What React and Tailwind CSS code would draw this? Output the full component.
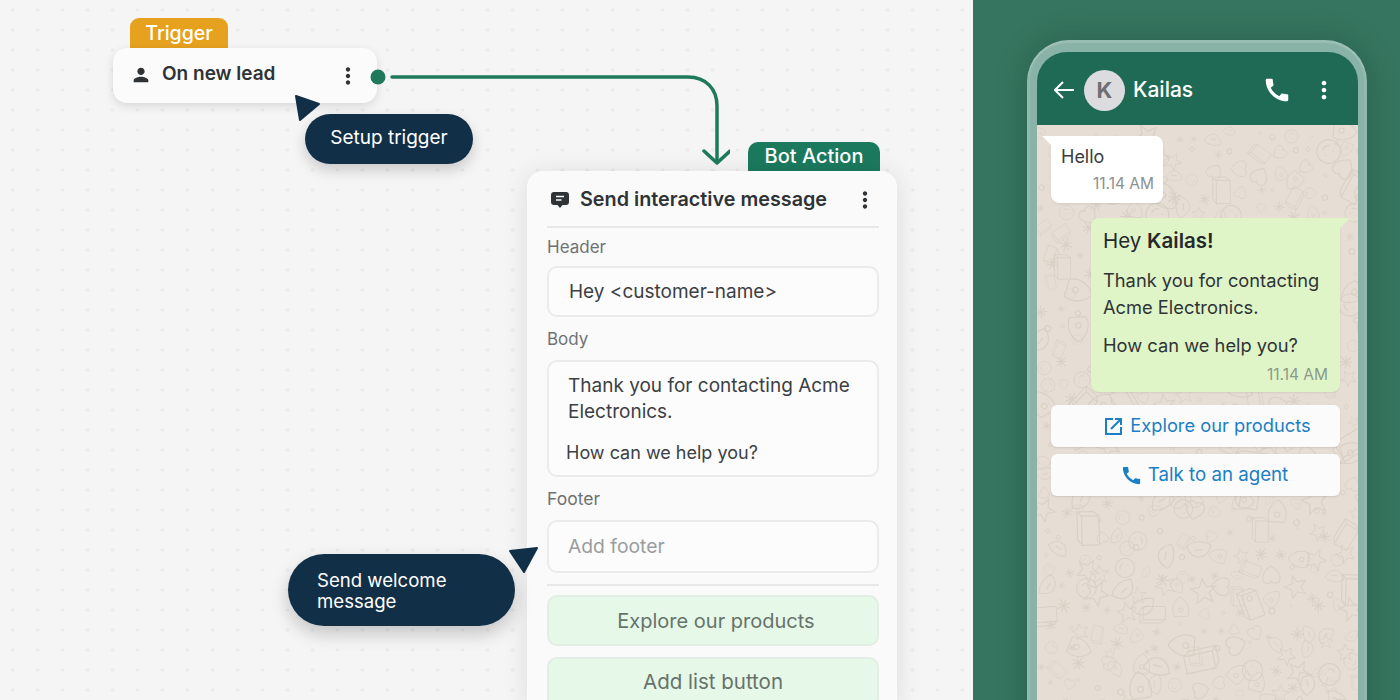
import React from "react";
import { MdPerson, MdMoreVert, MdCall } from "react-icons/md";

const inter = { fontFamily: "Inter, sans-serif" };

// faint wallpaper doodles, seeded so every render is the same
function Doodles() {
    let seed = 17;
    const rnd = () => {
        seed = (seed * 16807) % 2147483647;
        return seed / 2147483647;
    };
    const items = [];
    for (let y = 4; y < 600; y += 19) {
        for (let x = 2; x < 330; x += 19) {
            const px = x + rnd() * 14;
            const py = y + rnd() * 14;
            const rot = rnd() * 360;
            const kind = Math.floor(rnd() * 10);
            const s = 0.6 + rnd() * 0.9;
            const key = `${x}-${y}`;
            const t = `translate(${px} ${py}) rotate(${rot}) scale(${s})`;
            if (kind === 0) items.push(<path key={key} transform={t} d="M0 -9 L2.6 -3 L9 -2.8 L4 1.4 L5.6 8 L0 4.4 L-5.6 8 L-4 1.4 L-9 -2.8 L-2.6 -3 Z" />);
            else if (kind === 1) items.push(<path key={key} transform={t} d="M-8 0 A8 8 0 1 1 8 0 A8 8 0 1 1 -8 0 M-3 -2 L-3 -1 M3 -2 L3 -1 M-3 3 Q0 5 3 3" />);
            else if (kind === 2) items.push(<path key={key} transform={t} d="M-10 -6 H10 V6 H-10 Z M-10 -6 L-6 -9 H13 L10 -6 M10 6 L13 2 V-9" />);
            else if (kind === 3) items.push(<path key={key} transform={t} d="M0 7 C-10 0 -7 -7 -2 -6 C-1 -6 0 -5 0 -4 C0 -5 1 -6 2 -6 C7 -7 10 0 0 7 Z" />);
            else if (kind === 4 || kind === 5) items.push(<circle key={key} transform={t} cx="0" cy="0" r="2" />);
            else if (kind === 6) items.push(<path key={key} transform={t} d="M-9 3 C-5 -8 5 -8 9 3 C4 7 -4 7 -9 3 Z M-3 0 L3 0" />);
            else if (kind === 7) items.push(<path key={key} transform={t} d="M-6 8 C-10 0 -4 -8 0 -10 C4 -8 10 0 6 8 Z M-2 2 A2 2 0 1 0 2 2 A2 2 0 1 0 -2 2" />);
            else items.push(<path key={key} transform={t} d="M-5 0 L5 0 M0 -5 L0 5 M-3 -3 L3 3 M-3 3 L3 -3" />);
        }
    }
    return (
        <svg className="absolute inset-0 h-full w-full" fill="none" stroke="#d9d0c6" strokeWidth="0.8">
            {items}
        </svg>
    );
}

function Field({ label, labelClass, children, className }) {
    return (
        <div>
            <div className={`text-[#6f7274] ${labelClass}`}>{label}</div>
            <div className={`rounded-[10px] border-2 border-[#ebebeb] bg-[#fcfcfc] ${className}`}>{children}</div>
        </div>
    );
}

function FlowCanvas() {
    return (
        <div
            className="relative h-full w-[973px] shrink-0 bg-[#f5f5f5] bg-[radial-gradient(#ebebeb_1.5px,transparent_2.5px)] bg-[length:25px_20px]"
            style={inter}
        >
            {/* trigger node */}
            <div className="absolute left-[130px] top-[18px] flex h-[34px] w-[98px] justify-center rounded-t-[9px] bg-[#e6a11f] pt-[2px] text-[19.5px] font-medium leading-[26px] text-white">
                Trigger
            </div>
            <div className="absolute left-[113px] top-[48px] flex h-[55px] w-[264px] items-center rounded-[14px] bg-[#fbfbfb] pb-[2px] pl-[17px] pr-[18px] shadow-[0_3px_10px_rgba(0,0,0,0.12)]">
                <MdPerson size={22} className="text-[#2f3336]" />
                <span className="ml-[10px] text-[19px] font-semibold text-[#2f3336]">On new lead</span>
                <MdMoreVert size={26} className="ml-auto mr-[-2px] mt-[3px] text-[#2f3336]" />
            </div>

            {/* connector */}
            <svg className="absolute left-[370px] top-[60px]" width="360" height="110" fill="none">
                <circle cx="8" cy="17" r="7.5" fill="#1f7a5c" />
                <path d="M22 17 H318 C336 17 347 29 347 46 V100" stroke="#1f7a5c" strokeWidth="3.5" strokeLinecap="round" />
                <path d="M334 91 L347 103 L360 91" stroke="#1f7a5c" strokeWidth="3.5" strokeLinecap="round" strokeLinejoin="round" />
            </svg>

            {/* setup trigger callout */}
            <svg className="absolute left-[290px] top-[90px]" width="36" height="36">
                <path d="M6 6 L29 14 L10 30 Z" fill="#122f48" stroke="#122f48" strokeWidth="2" strokeLinejoin="round" />
            </svg>
            <div className="absolute left-[305px] top-[114px] flex h-[50px] w-[168px] items-center justify-center rounded-full bg-[#122f48] pb-[2px] text-[19px] text-white shadow-[0_6px_14px_rgba(0,0,0,0.18)]">
                Setup trigger
            </div>

            {/* bot action node */}
            <div className="absolute left-[748px] top-[142px] flex h-[32px] w-[132px] justify-center rounded-t-[10px] bg-[#1b7a5e] text-[20px] font-medium leading-[28px] text-white">
                Bot Action
            </div>
            <div className="absolute left-[527px] top-[171px] w-[370px] rounded-t-[16px] bg-[#fafafa] pl-[20px] pr-[18px] shadow-[0_2px_26px_rgba(0,0,0,0.1)]">
                <div className="flex h-[57px] items-center border-b-2 border-[#e8e8e8] pt-[2px]">
                    <svg width="20" height="20" viewBox="0 0 20 20" className="ml-[3px] shrink-0">
                        <path d="M4 2 H16 A3 3 0 0 1 19 5 V12 A3 3 0 0 1 16 15 H12.5 L10 18 L7.5 15 H4 A3 3 0 0 1 1 12 V5 A3 3 0 0 1 4 2 Z" fill="#2f3336" />
                        <path d="M6 6.5 H14 M6 10 H11.5" stroke="#fafafa" strokeWidth="1.6" />
                    </svg>
                    <span className="ml-[10px] text-[19.8px] font-semibold text-[#2f3336]">Send interactive message</span>
                    <MdMoreVert size={26} className="ml-auto mr-[1px] text-[#2f3336]" />
                </div>
                <Field
                    label="Header"
                    labelClass="h-[38px] pt-[8px] text-[17px] leading-[22px]"
                    className="flex h-[51px] items-center pl-[20px] pt-[1px] text-[19px] text-[#3c4043]"
                >
                    {"Hey <customer-name>"}
                </Field>
                <Field
                    label="Body"
                    labelClass="mt-[2px] h-[41px] pt-[9px] text-[17px] leading-[22px]"
                    className="h-[117px] px-[19px] pt-[11px] text-[19px] leading-[26px] text-[#3c4043]"
                >
                    <p>Thank you for contacting Acme Electronics.</p>
                    <p className="ml-[-2px] mt-[15px] text-[18px]">How can we help you?</p>
                </Field>
                <Field
                    label="Footer"
                    labelClass="mt-[2px] h-[41px] pt-[9px] text-[17.5px] leading-[22px]"
                    className="flex h-[53px] items-center pl-[19px] text-[19.3px] text-[#9a9c9e]"
                >
                    Add footer
                </Field>
                <div className="mt-[11px] border-t-2 border-[#e8e8e8]" />
                <div className="mt-[9px] flex h-[51px] items-center justify-center rounded-[10px] border-2 border-[#e2ede3] bg-[#e6f8e7] pl-[6px] text-[20px] text-[#66736b]">
                    Explore our products
                </div>
                <div className="mt-[11px] flex h-[51px] items-center justify-center rounded-[10px] border-2 border-[#e2ede3] bg-[#e6f8e7] text-[20.5px] text-[#66736b]">
                    Add list button
                </div>
            </div>

            {/* welcome callout */}
            <svg className="absolute left-[504px] top-[542px]" width="40" height="36">
                <path d="M6 9 L33 6 L20 30 Z" fill="#122f48" stroke="#122f48" strokeWidth="2" strokeLinejoin="round" />
            </svg>
            <div className="absolute left-[288px] top-[554px] flex h-[72px] w-[227px] items-center rounded-full bg-[#122f48] pl-[29px] pt-[2px] text-[18.6px] leading-[21px] text-white shadow-[0_8px_18px_rgba(0,0,0,0.2)]">
                Send welcome
                <br />
                message
            </div>
        </div>
    );
}

function PhonePanel() {
    return (
        <div className="flex-1 overflow-hidden bg-[#36755f] pl-[54px] pt-[40px]" style={inter}>
            <div className="h-[700px] w-[340px] rounded-t-[42px] bg-[#88b3a6] pl-[10px] pr-[9px] pt-[12px] shadow-[0_0_30px_rgba(0,40,30,0.25),inset_0_3px_0_rgba(255,255,255,0.14),inset_3px_0_0_rgba(255,255,255,0.08),inset_-3px_0_0_rgba(255,255,255,0.08)]">
                <div className="flex h-full flex-col overflow-hidden rounded-t-[30px]">
                    <div className="flex h-[73px] shrink-0 items-center bg-[#1f6a55] pt-[3px] text-white">
                        <svg width="20" height="20" viewBox="0 0 20 20" fill="none" stroke="#ffffff" strokeWidth="2" className="ml-[17px]">
                            <path d="M20 10 H1 M9 2 L1 10 L9 18" />
                        </svg>
                        <div className="ml-[10px] flex h-[41px] w-[41px] items-center justify-center rounded-full bg-[#dcdcdf] text-[22px] font-bold text-[#6f6f72]">
                            K
                        </div>
                        <span className="ml-[8px] text-[21px] font-medium">Kailas</span>
                        <MdCall size={30} className="ml-auto" />
                        <MdMoreVert size={28} className="ml-[18px] mr-[20px]" />
                    </div>
                    <div className="relative flex-1 bg-[#e6ddd4] pl-[14px] pr-[18px] pt-[11px]">
                        <Doodles />
                        <div className="relative h-[67px] w-[112px] rounded-[8px] rounded-tl-none bg-white pl-[10px] pt-[9px] shadow-[0_1px_2px_rgba(0,0,0,0.08)]">
                            <svg className="absolute left-[-9px] top-0" width="10" height="10">
                                <path d="M0 0 H10 V10 Z" fill="#ffffff" />
                            </svg>
                            <div className="text-[18px] leading-[24px] text-[#3a3d40]">Hello</div>
                            <div className="mt-[5px] pr-[9px] text-right text-[15.5px] leading-[20px] text-[#8d8f91]">11.14 AM</div>
                        </div>
                        <div className="relative ml-[40px] mt-[15px] h-[174px] w-[249px] rounded-[8px] rounded-tr-none bg-[#dff5c8] pl-[12px] pt-[10px] shadow-[0_1px_2px_rgba(0,0,0,0.08)]">
                            <svg className="absolute right-[-10px] top-0" width="10" height="10">
                                <path d="M0 0 H10 L0 10 Z" fill="#dff5c8" />
                            </svg>
                            <div className="text-[20.5px] leading-[26px] text-[#26292b]">
                                Hey <span className="font-semibold">Kailas!</span>
                            </div>
                            <div className="mt-[13px] text-[18.3px] leading-[27px] text-[#2f3336]">
                                Thank you for contacting
                                <br />
                                Acme Electronics.
                            </div>
                            <div className="mt-[11px] text-[18.3px] leading-[27px] text-[#2f3336]">How can we help you?</div>
                            <div className="mt-[6px] pr-[12px] text-right text-[15.5px] leading-[20px] text-[#8b9a88]">11.14 AM</div>
                        </div>
                        <div className="relative mt-[13px] flex h-[42px] w-[289px] items-center justify-center gap-[7px] rounded-[6px] bg-[#fbfbfb] pl-[24px] text-[18.3px] text-[#1a7fc4] shadow-[0_1px_2px_rgba(0,0,0,0.1)]">
                            <svg width="19" height="19" viewBox="0 0 19 19" fill="none" stroke="#1a7fc4" strokeWidth="2">
                                <path d="M9 2 H2 V17 H17 V10" />
                                <path d="M7 12 L17 2 M11 2 H17 V8" />
                            </svg>
                            Explore our products
                        </div>
                        <div className="relative mt-[7px] flex h-[42px] w-[289px] items-center justify-center gap-[5px] rounded-[6px] bg-[#fbfbfb] pl-[17px] text-[18.7px] text-[#1a7fc4] shadow-[0_1px_2px_rgba(0,0,0,0.1)]">
                            <MdCall size={23} />
                            Talk to an agent
                        </div>
                    </div>
                </div>
            </div>
        </div>
    );
}

export default function App() {
    return (
        <div className="flex h-[700px] w-[1400px] overflow-hidden">
            <FlowCanvas />
            <PhonePanel />
        </div>
    );
}
